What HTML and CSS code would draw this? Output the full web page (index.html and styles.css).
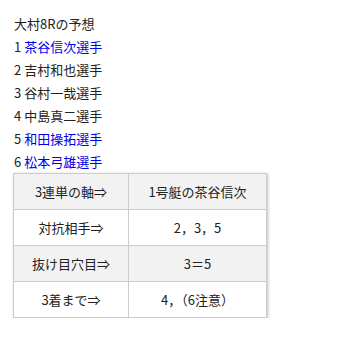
FILE: index.html
```html
<!DOCTYPE html>
<html lang="ja">
<head>
<meta charset="utf-8">
<link rel="stylesheet" href="styles.css">
</head>
<body>
<div class="post">
  <p class="line">大村8Rの予想</p>
  <p class="line">1 <span class="blue">茶谷信次選手</span></p>
  <p class="line">2 吉村和也選手</p>
  <p class="line">3 谷村一哉選手</p>
  <p class="line">4 中島真二選手</p>
  <p class="line">5 <span class="blue">和田操拓選手</span></p>
  <p class="line">6 <span class="blue">松本弓雄選手</span></p>
  <table class="pred">
    <tr class="shade"><td class="c1">3連単の軸⇒</td><td class="c2">1号艇の茶谷信次</td></tr>
    <tr><td class="c1">対抗相手⇒</td><td class="c2">2，3，5</td></tr>
    <tr class="shade"><td class="c1">抜け目穴目⇒</td><td class="c2">3＝5</td></tr>
    <tr><td class="c1">3着まで⇒</td><td class="c2">4，（6注意）</td></tr>
  </table>
</div>
</body>
</html>
```
FILE: styles.css
```css
html, body {
  margin: 0;
  padding: 0;
  background: #fff;
}
body {
  font-family: "Noto Sans CJK JP", "Noto Sans", sans-serif;
  font-size: 13px;
  color: #222;
}
.post {
  padding: 12px 0 0 14px;
}
.line {
  margin: 0;
  line-height: 23px;
}
.blue {
  color: #0000ee;
}
.pred {
  margin-left: -1px;
  border-collapse: collapse;
  width: 254px;
  box-shadow: 1px 1px 3px rgba(0, 0, 0, 0.25);
}
.pred td {
  border: 1px solid #ccc;
  height: 35px;
  padding: 0;
  text-align: center;
}
.pred .c1 {
  width: 114px;
}
.shade td {
  background: #f2f2f2;
}
```
